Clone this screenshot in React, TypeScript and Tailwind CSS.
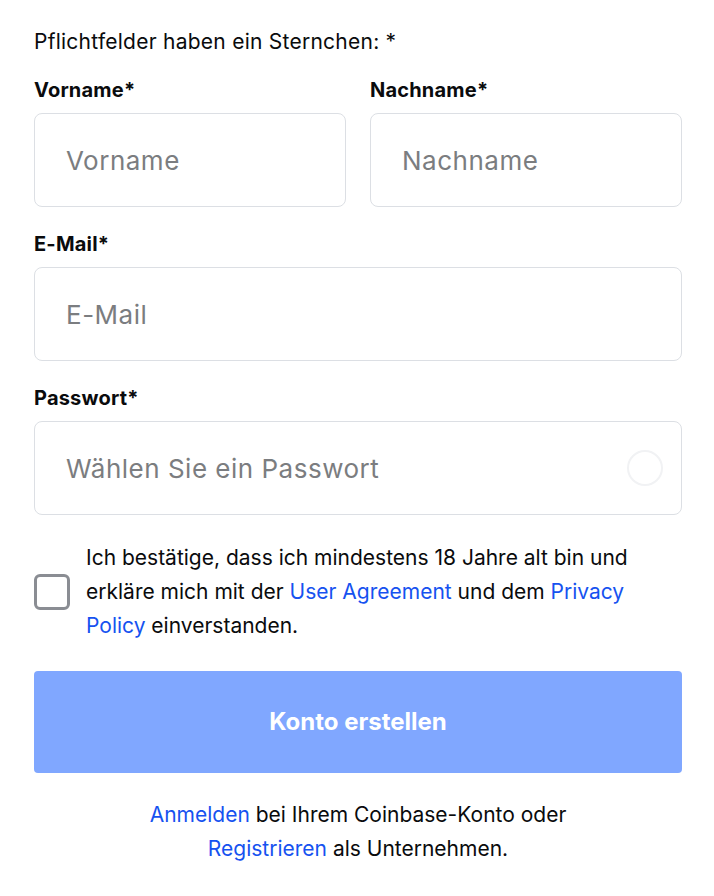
export default function App() {
  return (
    <div className="min-h-screen bg-white pl-[34px] pr-[32px] pt-[28px] text-[#0a0b0d] [font-family:Inter,'Liberation_Sans',sans-serif]">
      <p className="text-[21px] leading-[28px] tracking-[0.25px]">Pflichtfelder haben ein Sternchen: *</p>

      <div className="mt-[22px] grid grid-cols-2 gap-x-[24px]">
        <Field label="Vorname*" placeholder="Vorname" />
        <Field label="Nachname*" placeholder="Nachname" />
      </div>
      <div className="mt-[25px]">
        <Field label="E-Mail*" placeholder="E-Mail" />
      </div>
      <div className="mt-[25px]">
        <Field label="Passwort*" placeholder="Wählen Sie ein Passwort" password />
      </div>

      <div className="mt-[26px] flex items-center gap-[16px]">
        <div className="h-[36px] w-[36px] shrink-0 rounded-[6px] border-[3px] border-[#8a8d93]" />
        <p className="text-[21px] leading-[34px]">
          Ich bestätige, dass ich mindestens 18 Jahre alt bin und erkläre mich mit der{" "}
          <a className="text-[#1652f0]">User Agreement</a> und dem{" "}
          <a className="text-[#1652f0]">Privacy Policy</a> einverstanden.
        </p>
      </div>

      <button className="mt-[28px] flex h-[102px] w-full items-center justify-center rounded-[4px] bg-[#80a7ff] text-[24px] font-bold text-white">
        Konto erstellen
      </button>

      <p className="mt-[25px] text-center text-[21px] leading-[34px]">
        <a className="text-[#1652f0]">Anmelden</a> bei Ihrem Coinbase-Konto oder
        <br />
        <a className="text-[#1652f0]">Registrieren</a> als Unternehmen.
      </p>
    </div>
  );
}

function Field({ label, placeholder, password }: { label: string; placeholder: string; password?: boolean }) {
  return (
    <div>
      <label className="block text-[20px] font-bold leading-[24px] tracking-[0.2px]">{label}</label>
      <div className="mt-[11px] flex h-[94px] items-center justify-between rounded-[8px] border border-[#dcdfe4] pl-[31px] pr-[18px]">
        <span className="text-[26px] tracking-[0.5px] text-[#7b7d80]">{placeholder}</span>
        {password && <div className="h-[36px] w-[36px] rounded-full border-2 border-[#f1f2f4]" />}
      </div>
    </div>
  );
}
